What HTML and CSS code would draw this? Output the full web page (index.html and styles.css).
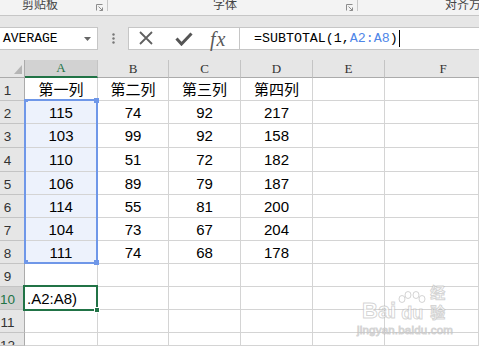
FILE: index.html
```html
<!DOCTYPE html>
<html lang="zh-CN">

<head>
    <meta charset="UTF-8">
    <title>SUBTOTAL</title>
    <link rel="stylesheet" href="styles.css">
</head>

<body>
    <!-- 功能区分组标签 -->
    <div class="ribbon">
        <div class="group g1">
            <span class="glabel">剪贴板</span>
            <svg class="launcher" width="7" height="7" viewBox="0 0 7 7"><path d="M0.5 6.5V0.5H6.5M2.5 2.5L6.5 6.5M6.5 3.5V6.5H3.5" fill="none" stroke="#8c8c8c" stroke-width="1"/></svg>
        </div>
        <div class="group g2">
            <span class="glabel">字体</span>
            <svg class="launcher" width="7" height="7" viewBox="0 0 7 7"><path d="M0.5 6.5V0.5H6.5M2.5 2.5L6.5 6.5M6.5 3.5V6.5H3.5" fill="none" stroke="#8c8c8c" stroke-width="1"/></svg>
        </div>
        <div class="group g3">
            <span class="glabel">对齐方</span>
        </div>
    </div>

    <!-- 编辑栏 -->
    <div class="fbar">
        <div class="namebox">
            <span>AVERAGE</span>
            <svg width="7" height="4" viewBox="0 0 7 4"><polygon points="0,0 7,0 3.5,4" fill="#666"/></svg>
        </div>
        <div class="dots">
            <svg width="3" height="11" viewBox="0 0 3 11"><circle cx="1.5" cy="1.5" r="1.2" fill="#777"/><circle cx="1.5" cy="5.5" r="1.2" fill="#777"/><circle cx="1.5" cy="9.5" r="1.2" fill="#777"/></svg>
        </div>
        <div class="fxbtns">
            <svg class="ic-x" width="14" height="14" viewBox="0 0 14 14"><path d="M1 1L13 13M13 1L1 13" stroke="#606060" stroke-width="1.8"/></svg>
            <svg class="ic-ok" width="18" height="14" viewBox="0 0 18 14"><path d="M1.5 6.5L6.5 12L16.5 1.5" fill="none" stroke="#555" stroke-width="3"/></svg>
            <span class="ic-fx">fx</span>
        </div>
        <div class="finput">=SUBTOTAL(1,<span class="ref">A2:A8</span>)<span class="caret"></span></div>
    </div>

    <!-- 工作表 -->
    <div class="sheet">
        <div class="corner"><svg width="8" height="9" viewBox="0 0 8 9"><polygon points="8,0 8,9 0,9" fill="#b5b5b5"/></svg></div>
        <div class="hd hd-on">A</div>
        <div class="hd">B</div>
        <div class="hd">C</div>
        <div class="hd">D</div>
        <div class="hd">E</div>
        <div class="hd hd-last">F</div>

        <div class="rh">1</div>
        <div class="c">第一列</div>
        <div class="c">第二列</div>
        <div class="c">第三列</div>
        <div class="c">第四列</div>
        <div class="c"></div>
        <div class="c"></div>

        <div class="rh">2</div>
        <div class="c sel">115</div>
        <div class="c">74</div>
        <div class="c">92</div>
        <div class="c">217</div>
        <div class="c"></div>
        <div class="c"></div>

        <div class="rh">3</div>
        <div class="c sel">103</div>
        <div class="c">99</div>
        <div class="c">92</div>
        <div class="c">158</div>
        <div class="c"></div>
        <div class="c"></div>

        <div class="rh">4</div>
        <div class="c sel">110</div>
        <div class="c">51</div>
        <div class="c">72</div>
        <div class="c">182</div>
        <div class="c"></div>
        <div class="c"></div>

        <div class="rh">5</div>
        <div class="c sel">106</div>
        <div class="c">89</div>
        <div class="c">79</div>
        <div class="c">187</div>
        <div class="c"></div>
        <div class="c"></div>

        <div class="rh">6</div>
        <div class="c sel">114</div>
        <div class="c">55</div>
        <div class="c">81</div>
        <div class="c">200</div>
        <div class="c"></div>
        <div class="c"></div>

        <div class="rh">7</div>
        <div class="c sel">104</div>
        <div class="c">73</div>
        <div class="c">67</div>
        <div class="c">204</div>
        <div class="c"></div>
        <div class="c"></div>

        <div class="rh">8</div>
        <div class="c sel">111</div>
        <div class="c">74</div>
        <div class="c">68</div>
        <div class="c">178</div>
        <div class="c"></div>
        <div class="c"></div>

        <div class="rh">9</div>
        <div class="c"></div>
        <div class="c"></div>
        <div class="c"></div>
        <div class="c"></div>
        <div class="c"></div>
        <div class="c"></div>

        <div class="rh rh-on">10</div>
        <div class="c edit">.A2:A8)</div>
        <div class="c"></div>
        <div class="c"></div>
        <div class="c"></div>
        <div class="c"></div>
        <div class="c"></div>

        <div class="rh">11</div>
        <div class="c"></div>
        <div class="c"></div>
        <div class="c"></div>
        <div class="c"></div>
        <div class="c"></div>
        <div class="c"></div>

        <div class="rh">12</div>
        <div class="c"></div>
        <div class="c"></div>
        <div class="c"></div>
        <div class="c"></div>
        <div class="c"></div>
        <div class="c"></div>

        <!-- 选区与活动单元格，盖在格子上面 -->
        <div class="range">
            <i class="hdl tl"></i><i class="hdl tr"></i><i class="hdl bl"></i><i class="hdl br"></i>
        </div>
        <div class="active"><i class="fill"></i></div>
    </div>

    <!-- 水印 -->
    <div class="wm">
        <div class="wm-top">
            <span class="wm-bai">Bai</span>
            <span class="wm-du">
                <svg class="paw" width="30" height="12" viewBox="0 0 30 12"><ellipse cx="5" cy="8" rx="3" ry="3.5"/><ellipse cx="11" cy="4" rx="3" ry="3.5"/><ellipse cx="19" cy="4" rx="3" ry="3.5"/><ellipse cx="25" cy="8" rx="3" ry="3.5"/></svg>du</span>
            <span class="wm-jy">经验</span>
        </div>
        <div class="wm-url">jingyan.baidu.com</div>
    </div>
</body>

</html>
```

FILE: styles.css
```css
* {
    margin: 0px;
    padding: 0px;
    box-sizing: border-box;
}

body {
    position: relative;
    width: 479px;
    height: 346px;
    overflow: hidden;
    background-color: #fff;
    font-family: "Liberation Sans", "Noto Sans CJK SC", sans-serif;
    color: #000;
}

/* 功能区 */
.ribbon {
    display: flex;
    height: 16px;
    background-color: #f3f3f3;
    border-bottom: 1px solid #c6c6c6;
    overflow: hidden;
}

.ribbon .group {
    display: flex;
    align-items: flex-start;
    height: 11px;
    flex-shrink: 0;
}

.ribbon .g1 {
    width: 108px;
    padding-left: 22px;
    border-right: 1px solid #c8c8c8;
}

.ribbon .g2 {
    width: 250px;
    padding-left: 105px;
    border-right: 1px solid #c8c8c8;
}

.ribbon .g3 {
    padding-left: 87px;
    white-space: nowrap;
}

.ribbon .glabel {
    font-family: "Noto Sans CJK SC", sans-serif;
    font-size: 12px;
    line-height: 12px;
    margin-top: -2px;
    color: #444;
    white-space: nowrap;
}

.ribbon .launcher {
    margin-left: auto;
    margin-right: 4px;
    margin-top: 4px;
}

/* 编辑栏 */
.fbar {
    display: flex;
    align-items: flex-start;
    height: 44px;
    padding-top: 11px;
    background-color: #e6e6e6;
}

.namebox {
    display: flex;
    align-items: center;
    justify-content: space-between;
    width: 98px;
    height: 23px;
    padding: 0px 6px 0px 3px;
    background-color: #fff;
    border: 1px solid #c6c6c6;
    border-left: none;
    font-family: "Liberation Mono", monospace;
    font-size: 13px;
}

.dots {
    display: flex;
    align-items: center;
    justify-content: center;
    width: 30px;
    height: 23px;
}

.fxbtns {
    display: flex;
    align-items: center;
    width: 112px;
    height: 23px;
    padding-left: 10px;
    background-color: #fff;
    border: 1px solid #c6c6c6;
}

.fxbtns .ic-x {
    margin-top: -2px;
}

.fxbtns .ic-ok {
    margin-left: 22px;
}

.fxbtns .ic-fx {
    margin-left: 17px;
    font-family: "Liberation Serif", serif;
    font-style: italic;
    font-size: 20px;
    line-height: 20px;
    letter-spacing: 1px;
    color: #5a5a5a;
}

.finput {
    display: flex;
    align-items: center;
    flex: 1;
    height: 23px;
    padding-left: 14px;
    background-color: #fff;
    border: 1px solid #c6c6c6;
    border-left: none;
    border-right: none;
    font-family: "Liberation Mono", monospace;
    font-size: 13.3px;
    white-space: pre;
}

.finput .ref {
    color: #4f86e8;
}

.finput .caret {
    display: inline-block;
    width: 1px;
    height: 17px;
    margin-left: 1px;
    background-color: #000;
}

/* 工作表 */
.sheet {
    position: relative;
    display: grid;
    grid-template-columns: 25px 73px 71px 72px 72px 72px 94px;
    grid-template-rows: 18px 23px 23px 24px 24px 23px 23px 23px 23px 23px 23px 23px 13px;
    width: 479px;
}

.sheet .corner {
    display: flex;
    align-items: flex-end;
    justify-content: flex-end;
    padding: 0px 2px 3px 0px;
    background-color: #e6e6e6;
    border-right: 1px solid #ababab;
    border-bottom: 1px solid #ababab;
}

.sheet .hd {
    display: flex;
    align-items: center;
    justify-content: center;
    background-color: #e6e6e6;
    border-right: 1px solid #c4c4c4;
    border-bottom: 1px solid #ababab;
    font-family: "Liberation Serif", serif;
    font-size: 13px;
    color: #333;
}

.sheet .hd-on {
    background-color: #d2d2d2;
    border-bottom: 2px solid #217346;
    color: #217346;
}

.sheet .hd-last {
    padding-left: 22px;
    border-right: none;
}

.sheet .rh {
    display: flex;
    align-items: flex-start;
    justify-content: center;
    padding: 5px 9px 0px 0px;
    background-color: #e6e6e6;
    border-right: 1px solid #ababab;
    border-bottom: 1px solid #c4c4c4;
    font-size: 13.5px;
    line-height: 15px;
    color: #333;
    overflow: hidden;
}

.sheet .rh-on {
    background-color: #d2d2d2;
    color: #217346;
}

.sheet .c {
    display: flex;
    align-items: center;
    justify-content: center;
    border-right: 1px solid #d4d4d4;
    border-bottom: 1px solid #d4d4d4;
    font-size: 15px;
    line-height: 17px;
    white-space: nowrap;
}

.sheet .sel {
    background-color: #edf2fc;
}

.sheet .edit {
    justify-content: flex-start;
    padding-left: 2px;
}

.sheet .range {
    position: absolute;
    left: 24px;
    top: 39px;
    width: 74px;
    height: 165px;
    border: 2px solid #6f97e8;
}

.sheet .range .hdl {
    position: absolute;
    width: 5px;
    height: 5px;
    background-color: #6f97e8;
}

.sheet .range .tl {
    left: -1px;
    top: -2px;
    width: 3px;
    height: 3px;
}

.sheet .range .tr {
    right: -3px;
    top: -3px;
}

.sheet .range .bl {
    left: -1px;
    bottom: -1px;
    width: 3px;
    height: 3px;
}

.sheet .range .br {
    right: -3px;
    bottom: -3px;
}

.sheet .active {
    position: absolute;
    left: 23px;
    top: 225px;
    width: 75px;
    height: 26px;
    border: 2px solid #217346;
}

.sheet .active .fill {
    position: absolute;
    right: -4px;
    bottom: -4px;
    width: 6px;
    height: 6px;
    background-color: #217346;
    border: 1px solid #fff;
}

/* 水印 */
.wm {
    position: absolute;
    left: 357px;
    top: 291px;
    width: 96px;
    color: rgba(255, 255, 255, 0.75);
    -webkit-text-stroke: 1px rgba(160, 160, 160, 0.45);
}

.wm .wm-top {
    display: flex;
    align-items: flex-end;
    padding-left: 5px;
    height: 31px;
}

.wm .wm-bai {
    font-size: 22px;
    line-height: 22px;
    font-weight: bold;
}

.wm .wm-du {
    position: relative;
    display: flex;
    flex-direction: column;
    align-items: center;
    font-size: 18px;
    line-height: 18px;
    font-weight: bold;
    margin-left: 1px;
}

.wm .paw {
    fill: rgba(255, 255, 255, 0.75);
    stroke: rgba(160, 160, 160, 0.45);
    stroke-width: 1;
    margin-bottom: 1px;
}

.wm .wm-jy {
    font-family: "Noto Sans CJK SC", sans-serif;
    font-size: 15px;
    line-height: 20px;
    font-weight: bold;
    margin-left: 3px;
}

.wm .wm-url {
    margin-top: 2px;
    font-size: 11.5px;
    line-height: 12px;
    letter-spacing: 0.2px;
}
```
